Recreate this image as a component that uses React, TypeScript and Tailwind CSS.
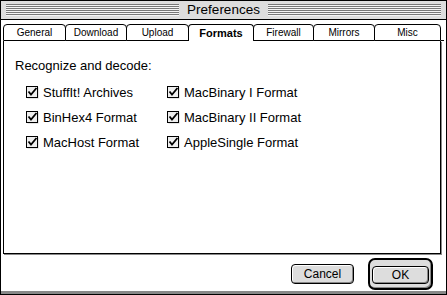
import React from 'react';

const tabs = [
  { name: "General", w: 63 },
  { name: "Download", w: 62 },
  { name: "Upload", w: 63 },
  { name: "Formats", w: 66, active: true },
  { name: "Firewall", w: 61 },
  { name: "Mirrors", w: 62 },
  { name: "Misc", w: 67 },
];

const left = ["StuffIt! Archives", "BinHex4 Format", "MacHost Format"];
const right = ["MacBinary I Format", "MacBinary II Format", "AppleSingle Format"];

function Stripes() {
  return (
    <div className="flex-1 h-[12px] bg-[repeating-linear-gradient(to_bottom,#777_0px,#777_1px,#f4f4f4_1px,#f4f4f4_2px)] border-b border-[#f4f4f4]" />
  );
}

function CheckBox() {
  return (
    <svg width="14" height="14" viewBox="0 0 14 14" className="shrink-0">
      <rect x="1.5" y="1.5" width="11" height="11" fill="#ccc" />
      <rect x="0.5" y="0.5" width="11" height="11" fill="#eee" stroke="#000" />
      <path d="M2.5 5.5 L5 8.5 L10.5 2" stroke="#000" strokeWidth="1.8" fill="none" />
    </svg>
  );
}

function Check({ label }: { label: string }) {
  return (
    <div className="flex items-center gap-[3px] h-[25px]">
      <CheckBox />
      <span className="text-[13px] text-black">{label}</span>
    </div>
  );
}

export default function App() {
  return (
    <div
      className="w-[447px] h-[295px] bg-white border border-black flex flex-col overflow-hidden"
      style={{ fontFamily: '"Liberation Sans", Arial, sans-serif' }}
    >
      {/* title bar */}
      <div className="h-[19px] bg-[#dddddd] border-b border-black flex items-center px-[5px] gap-[8px] shrink-0">
        <Stripes />
        <span className="text-[13.5px] text-black leading-none">Preferences</span>
        <Stripes />
      </div>

      <div className="flex-1 flex flex-col px-[2px] pt-[4px]">
        {/* tabs */}
        <div className="flex h-[17px] shrink-0">
          {tabs.map((t, i) => (
            <div
              key={t.name}
              style={{ width: t.w }}
              className={
                "flex items-center justify-center rounded-t-[4px] border-t border-l border-r border-black bg-white text-[10px] text-black " +
                (i > 0 ? "-ml-px " : "") +
                (t.active ? "font-bold text-[11px]" : "border-b")
              }
            >
              {t.name}
            </div>
          ))}
          <div className="flex-1 border-b border-black" />
        </div>

        {/* panel */}
        <div className="h-[213px] mr-[3px] border-l border-r border-b border-black shadow-[1px_1px_0_#888] pl-[11px] pt-[18px] shrink-0">
          <div className="text-[13px] text-black leading-none">Recognize and decode:</div>
          <div className="flex mt-[8px] pl-[11px]">
            <div className="w-[141px] flex flex-col">
              {left.map((l) => (
                <Check key={l} label={l} />
              ))}
            </div>
            <div className="flex flex-col">
              {right.map((l) => (
                <Check key={l} label={l} />
              ))}
            </div>
          </div>
        </div>

        {/* buttons */}
        <div className="flex-1 flex items-center justify-end gap-[14px] pr-[11px] pt-[2px]">
          <button className="w-[63px] h-[20px] rounded-[4px] border border-black bg-[#dddddd] shadow-[inset_1px_1px_0_#fff,inset_-1px_-1px_0_#888] text-[12px] text-black leading-none">
            Cancel
          </button>
          <div className="p-[2px] rounded-[7px] border-[2px] border-black bg-[#dddddd] shadow-[inset_-1px_-1px_0_#888]">
            <button className="w-[57px] h-[18px] rounded-[4px] border border-black bg-[#dddddd] shadow-[inset_1px_1px_0_#fff,inset_-1px_-1px_0_#888] text-[12px] text-black leading-none">
              OK
            </button>
          </div>
        </div>
      </div>
      <div className="h-[3px] bg-[#888] shrink-0" />
    </div>
  );
}
